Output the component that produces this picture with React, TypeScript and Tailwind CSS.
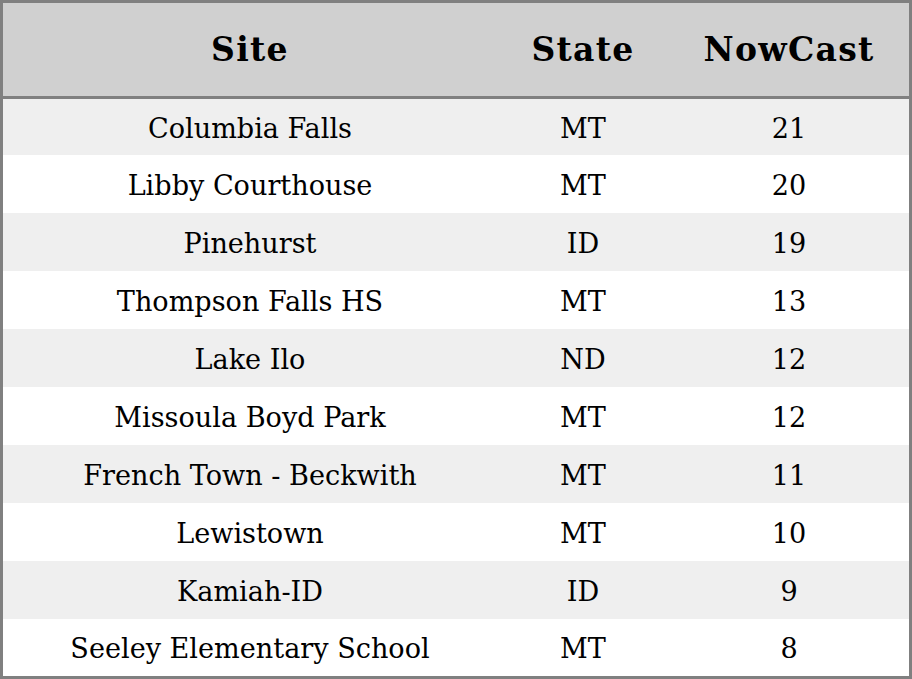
import React from "react";

const rows: [string, string, string][] = [
  ["Columbia Falls", "MT", "21"],
  ["Libby Courthouse", "MT", "20"],
  ["Pinehurst", "ID", "19"],
  ["Thompson Falls HS", "MT", "13"],
  ["Lake Ilo", "ND", "12"],
  ["Missoula Boyd Park", "MT", "12"],
  ["French Town - Beckwith", "MT", "11"],
  ["Lewistown", "MT", "10"],
  ["Kamiah-ID", "ID", "9"],
  ["Seeley Elementary School", "MT", "8"],
];

const heights = ["h-[56px]", "h-[58px]", "h-[58px]", "h-[58px]", "h-[58px]", "h-[58px]", "h-[58px]", "h-[58px]", "h-[58px]", "h-[57px]"];

export default function App() {
  return (
    <div className="w-[912px] h-[679px] border-[3px] border-[#808080] bg-white flex flex-col font-['DejaVu_Serif',serif] text-black">
      <div className="h-[92px] shrink-0 bg-[#d0d0d0] border-b-[3px] border-[#808080] box-content flex items-center pt-[1px] text-[33px] font-bold tracking-[1.3px]">
        <div className="w-[494px] text-center">Site</div>
        <div className="w-[172px] text-center">State</div>
        <div className="flex-1 text-center">NowCast</div>
      </div>
      {rows.map((r, i) => (
        <div
          key={i}
          className={`${heights[i]} shrink-0 flex items-center pt-[4px] text-[27.1px] ${i % 2 === 0 ? "bg-[#efefef]" : "bg-white"}`}
        >
          <div className="w-[494px] text-center">{r[0]}</div>
          <div className="w-[172px] text-center">{r[1]}</div>
          <div className="flex-1 text-center">{r[2]}</div>
        </div>
      ))}
    </div>
  );
}
